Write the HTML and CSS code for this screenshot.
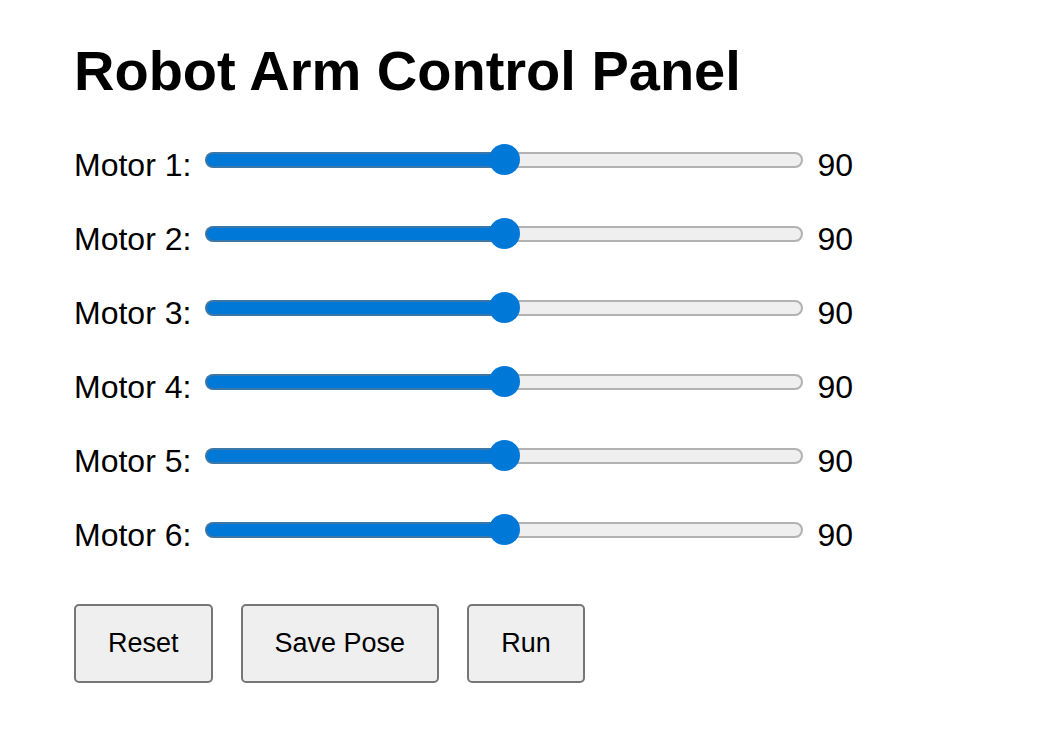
FILE: index.html
```html
<!DOCTYPE html>
<html lang="en">
<head>
<meta charset="utf-8">
<title>Robot Arm Control Panel</title>
<link rel="stylesheet" href="styles.css">
</head>
<body>
<main class="panel">
  <h1 class="title">Robot Arm Control Panel</h1>
  <div class="motors">
    <div class="motor"><label for="m1">Motor 1:</label><input class="slider" type="range" id="m1" min="0" max="180" value="90"><output for="m1">90</output></div>
    <div class="motor"><label for="m2">Motor 2:</label><input class="slider" type="range" id="m2" min="0" max="180" value="90"><output for="m2">90</output></div>
    <div class="motor"><label for="m3">Motor 3:</label><input class="slider" type="range" id="m3" min="0" max="180" value="90"><output for="m3">90</output></div>
    <div class="motor"><label for="m4">Motor 4:</label><input class="slider" type="range" id="m4" min="0" max="180" value="90"><output for="m4">90</output></div>
    <div class="motor"><label for="m5">Motor 5:</label><input class="slider" type="range" id="m5" min="0" max="180" value="90"><output for="m5">90</output></div>
    <div class="motor"><label for="m6">Motor 6:</label><input class="slider" type="range" id="m6" min="0" max="180" value="90"><output for="m6">90</output></div>
  </div>
  <div class="actions">
    <button class="action" type="button" id="reset">Reset</button>
    <button class="action" type="button">Save Pose</button>
    <button class="action" type="button">Run</button>
  </div>
</main>
<script src="script.js"></script>
</body>
</html>
```
FILE: styles.css
```css
* {
  box-sizing: border-box;
}

body {
  margin: 0;
  background: #fff;
  color: #000;
  font-family: "Liberation Sans", Arial, sans-serif;
  font-size: 32px;
  line-height: 38px;
}

.panel {
  padding: 39px 74px;
}

.title {
  margin: 0 0 41px;
  font-size: 56px;
  line-height: 64px;
  font-weight: 700;
}

.motors {
  display: grid;
  gap: 32px;
}

.motor {
  display: flex;
  align-items: center;
  gap: 14px;
}

.slider {
  --fill: 50%;
  appearance: none;
  flex: 0 1 598px;
  min-width: 0;
  height: 32px;
  margin: 0 0 10px;
  background: transparent;
}

.slider::-webkit-slider-runnable-track {
  height: 16px;
  border: 2px solid rgba(118, 118, 118, 0.5);
  border-radius: 8px;
  background: linear-gradient(to right, #0078d7 var(--fill), #efefef var(--fill)) border-box;
}

.slider::-webkit-slider-thumb {
  appearance: none;
  width: 31px;
  height: 31px;
  margin-top: -10px;
  border: 0;
  border-radius: 50%;
  background: #0078d7;
}

.actions {
  display: flex;
  flex-wrap: wrap;
  gap: 28px;
  margin-top: 48px;
}

.action {
  padding: 20px 32px;
  border: 2px solid #767676;
  border-radius: 5px;
  background: #efefef;
  color: #000;
  font-family: inherit;
  font-size: 27px;
  line-height: 35px;
}
```
FILE: script.js
```js
const sliders = document.querySelectorAll('.slider');

function update(slider) {
  slider.style.setProperty('--fill', (slider.value / slider.max) * 100 + '%');
  slider.nextElementSibling.value = slider.value;
}

sliders.forEach((slider) => {
  slider.addEventListener('input', () => update(slider));
});

document.getElementById('reset').addEventListener('click', () => {
  sliders.forEach((slider) => {
    slider.value = 90;
    update(slider);
  });
});
```
